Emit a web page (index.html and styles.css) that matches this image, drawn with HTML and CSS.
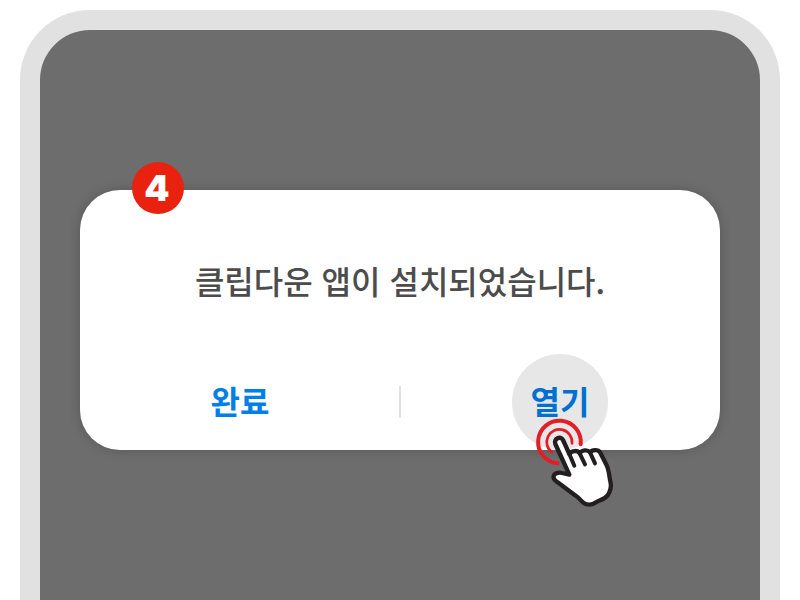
FILE: index.html
```html
<!DOCTYPE html>
<html lang="ko">
<head>
<meta charset="utf-8">
<meta name="viewport" content="width=device-width, initial-scale=1">
<title>클립다운 설치 완료</title>
<link rel="stylesheet" href="styles.css">
</head>
<body>
<main class="phone">
  <section class="dialog" role="dialog" aria-labelledby="message">
    <span class="step">4</span>
    <p class="message" id="message">클립다운 앱이 설치되었습니다.</p>
    <div class="actions">
      <button class="action" type="button">완료</button>
      <span class="divider"></span>
      <div class="target">
        <button class="action action-open" type="button">열기</button>
        <svg class="pointer" viewBox="0 0 270 300" fill="none" stroke-linecap="round" stroke-linejoin="round" aria-hidden="true">
          <path d="M152 103A64 64 0 1 0 83 160" stroke="#e31e26" stroke-width="12"/>
          <path d="M126 100A38 38 0 1 0 66 127" stroke="#e31e26" stroke-width="8"/>
          <path d="M76 102C70 86 92 76 99 90L118 132C126 121 143 120 149 130C156 120 172 118 180 127C186 119 204 117 210 127L228 162C238 180 237 198 241 214C245 229 241 244 233 256C223 269 208 270 198 277C186 286 171 286 160 278C151 272 147 262 137 257L83 217C75 212 69 206 71 198C73 190 86 186 96 189L118 194Z" fill="#fff" stroke="#231f20" stroke-width="13"/>
          <path d="M118 132L133 167M149 130L165 163M180 127L195 160" stroke="#231f20" stroke-width="12"/>
        </svg>
      </div>
    </div>
  </section>
</main>
</body>
</html>
```
FILE: styles.css
```css
* {
  box-sizing: border-box;
}

body {
  margin: 0;
  min-height: 100vh;
  display: flex;
  padding: 10px 20px 0;
  background: #fff;
  font-family: "Noto Sans CJK KR", sans-serif;
}

.phone {
  flex: 1;
  padding: 160px 40px 80px;
  background: #6d6d6d;
  border: 20px solid #e1e1e1;
  border-bottom: 0;
  border-radius: 70px 70px 0 0;
}

.dialog {
  position: relative;
  padding-top: 66px;
  background: #fff;
  border-radius: 40px;
  box-shadow: 0 0 12px rgba(0, 0, 0, 0.2);
}

.step {
  position: absolute;
  top: -28px;
  left: 52px;
  width: 52px;
  height: 52px;
  padding-right: 2px;
  border-radius: 50%;
  background: #e8220f;
  color: #fff;
  font: 900 36px/52px Inter, sans-serif;
  text-align: center;
}

.message {
  margin: 0 0 50px;
  color: #4c4c4c;
  font-size: 32px;
  font-weight: 500;
  line-height: 48px;
  text-align: center;
}

.actions {
  display: grid;
  grid-template-columns: 1fr 0 1fr;
  align-items: center;
  justify-items: center;
}

.divider {
  width: 2px;
  height: 32px;
  background: #e0e0e0;
}

.target {
  position: relative;
}

.action {
  display: block;
  width: 96px;
  height: 96px;
  padding: 0 0 4px;
  border: 0;
  border-radius: 50%;
  background: transparent;
  color: #007ee9;
  font: inherit;
  font-size: 32px;
  font-weight: 700;
  line-height: 48px;
  white-space: nowrap;
}

.action-open {
  background: #e7e7e7;
  color: #0071d3;
}

.pointer {
  position: absolute;
  top: 56px;
  left: 18px;
  width: 90px;
  height: 100px;
  pointer-events: none;
}
```
